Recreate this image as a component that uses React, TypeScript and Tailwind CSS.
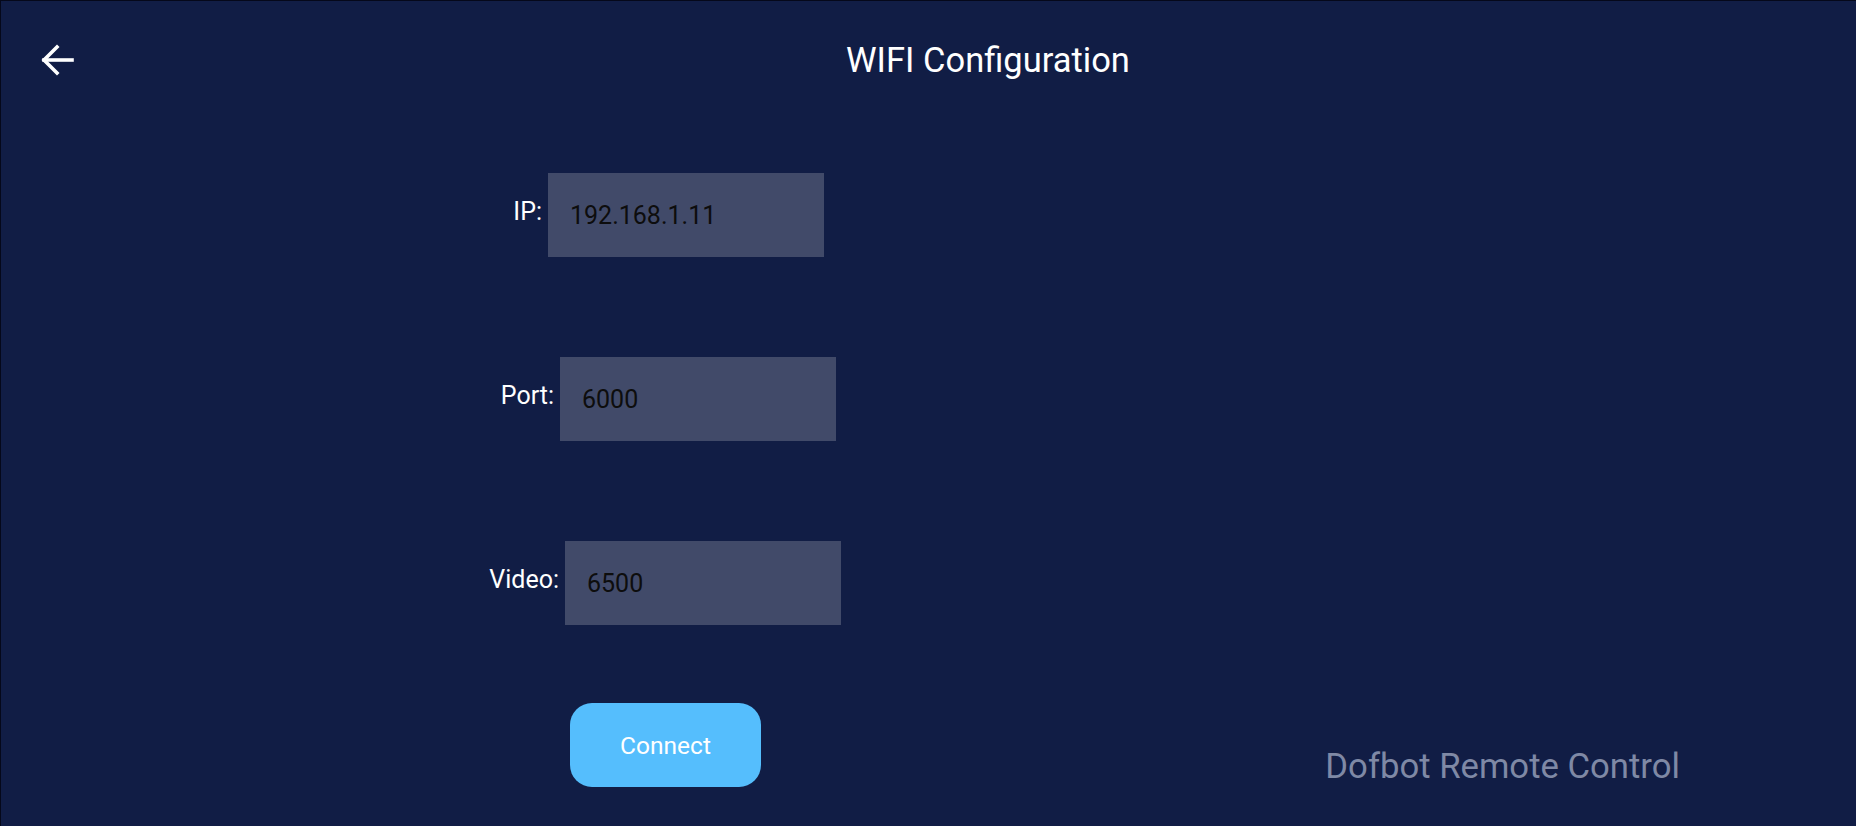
import { useState } from 'react'

interface FieldRowProps {
  label: string
  value: string
  boxLeft: number
  onChange: (v: string) => void
}

const font = { fontFamily: 'Roboto, "Noto Sans", sans-serif' }

function FieldRow({ label, value, boxLeft, onChange }: FieldRowProps) {
  // label column width is the box's x position, label is right-aligned against it
  return (
    <div className="flex items-center h-[84px]">
      <div
        className="text-right pr-[6px] pb-[8px] text-[25px] text-white leading-none"
        style={{ width: boxLeft }}
      >
        {label}
      </div>
      <input
        value={value}
        onChange={(e) => onChange(e.target.value)}
        className="w-[276px] h-[84px] bg-[#414a69] pl-[22px] text-[25px] text-[#0d0d0d] outline-none"
        style={font}
      />
    </div>
  )
}

export default function App() {
  const [ip, setIp] = useState('192.168.1.11')
  const [port, setPort] = useState('6000')
  const [video, setVideo] = useState('6500')

  return (
    <div
      className="w-full h-[826px] bg-[#111d45] border-l border-t border-[#05081a] flex flex-col overflow-hidden"
      style={font}
    >
      {/* Header */}
      <div className="flex items-center h-[118px] shrink-0">
        <button className="ml-[39px] w-[34px] h-[34px] flex items-center justify-center text-white">
          <svg width="34" height="34" viewBox="0 0 34 34" fill="none" stroke="currentColor" strokeWidth="3.6" strokeLinecap="square">
            <path d="M32 17H4" />
            <path d="M17 4L4 17L17 30" />
          </svg>
        </button>
        <h1 className="ml-[772px] text-[34.5px] text-white leading-none font-normal">WIFI Configuration</h1>
      </div>

      {/* Form */}
      <div className="flex flex-col gap-[100px] pt-[54px]">
        <FieldRow label="IP:" value={ip} boxLeft={547} onChange={setIp} />
        <FieldRow label="Port:" value={port} boxLeft={559} onChange={setPort} />
        <FieldRow label="Video:" value={video} boxLeft={564} onChange={setVideo} />
      </div>

      {/* Bottom row */}
      <div className="flex items-center pt-[78px]">
        <button className="ml-[569px] w-[191px] h-[84px] pt-[3px] rounded-[22px] bg-[#55befd] text-white text-[24.5px] leading-none">
          Connect
        </button>
        <div className="ml-auto mr-[176px] pt-[42px] text-[34.7px] text-[#7f89a5] leading-none">
          Dofbot Remote Control
        </div>
      </div>
    </div>
  )
}
